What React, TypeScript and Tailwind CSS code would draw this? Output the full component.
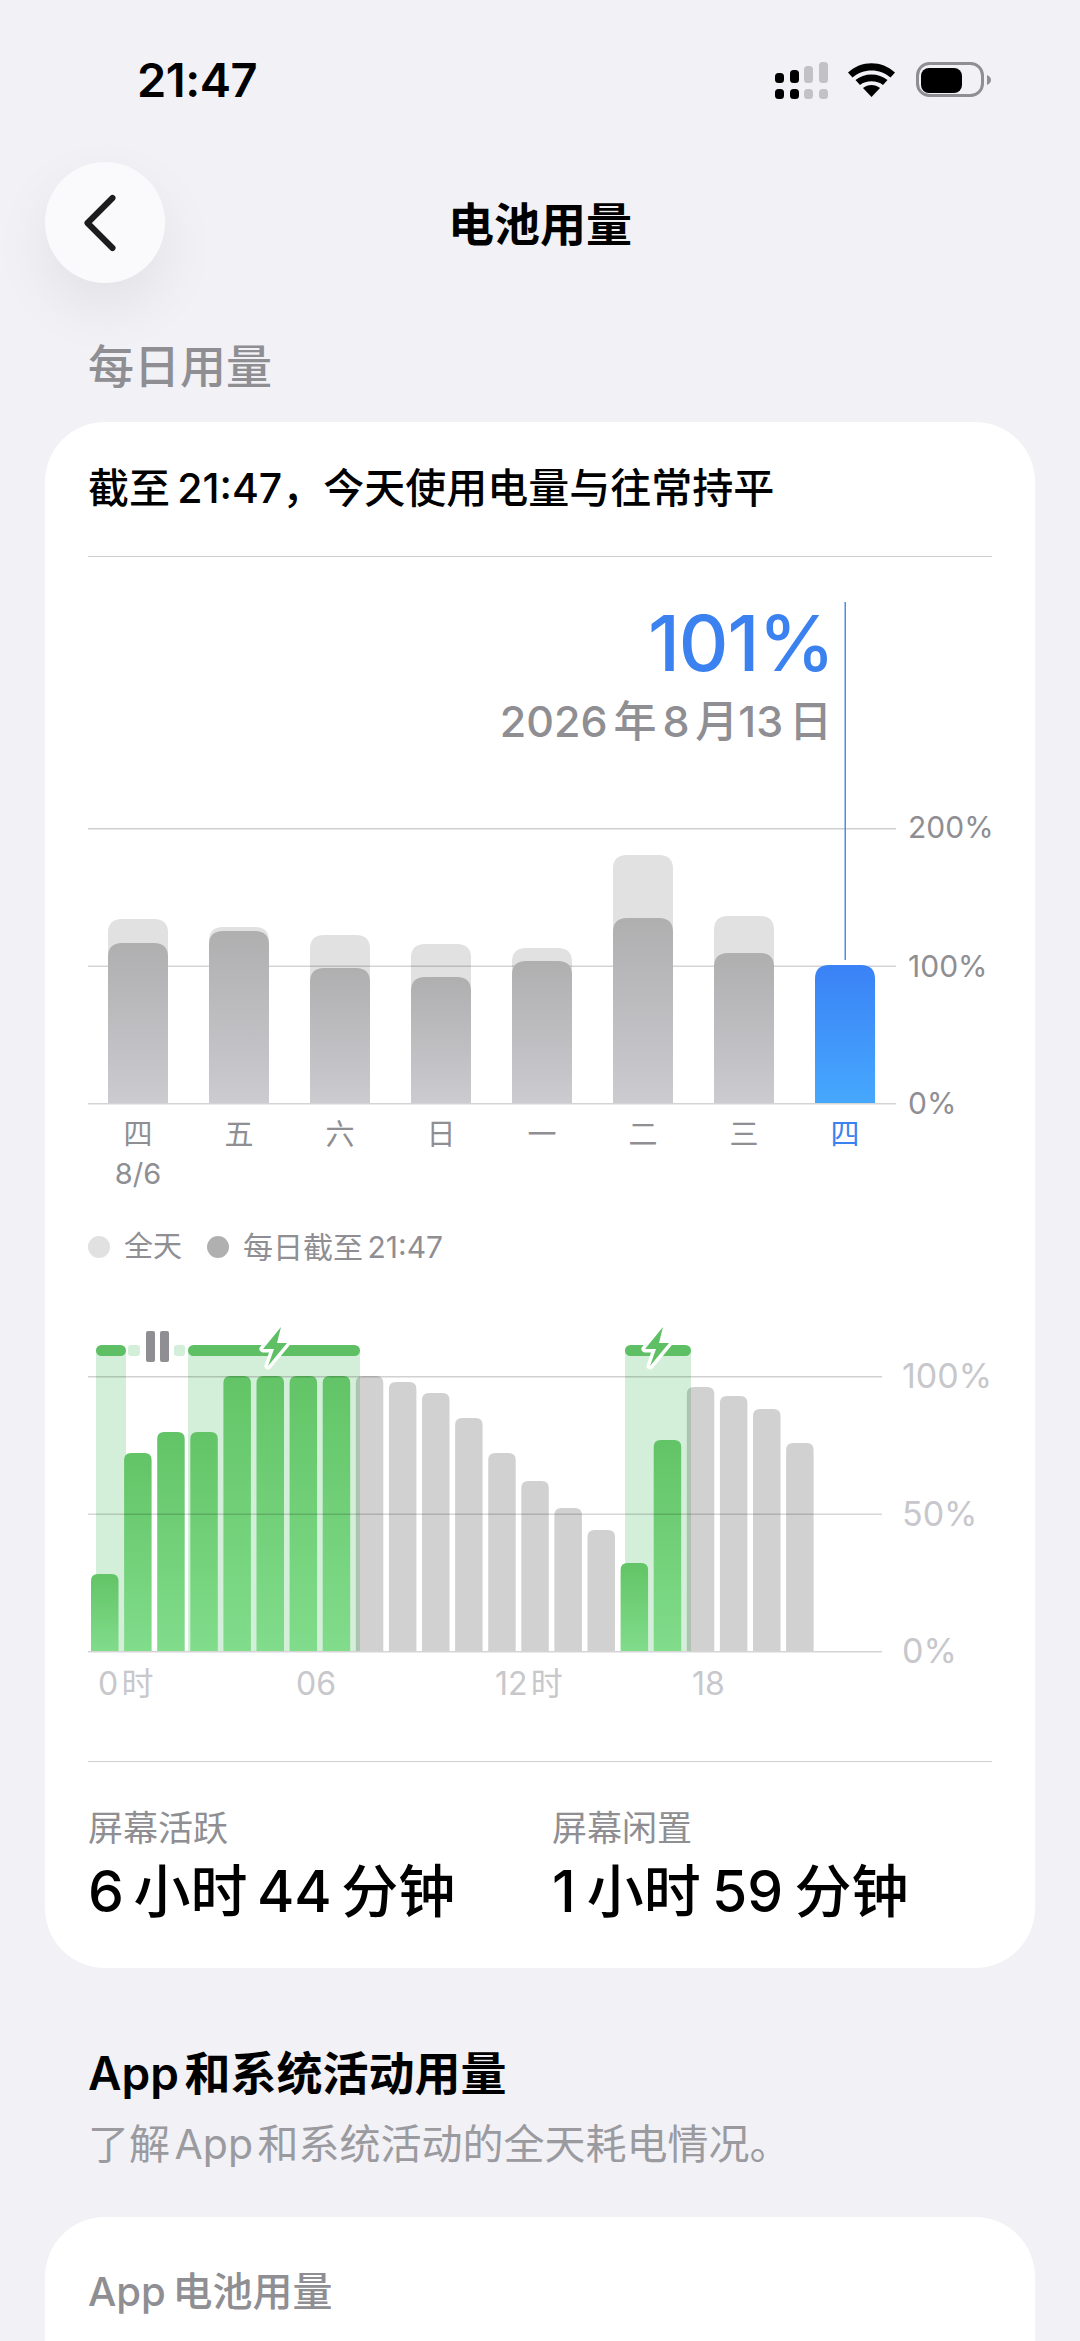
import { ChevronLeft } from 'lucide-react';

const dayBars = [
  { x: 108, full: 919, today: 943 },
  { x: 209, full: 927, today: 931 },
  { x: 310, full: 935, today: 968 },
  { x: 411, full: 944, today: 977 },
  { x: 512, full: 948, today: 961 },
  { x: 613, full: 855, today: 918 },
  { x: 714, full: 916, today: 953 },
];

const dayLabels = ['四', '五', '六', '日', '一', '二', '三', '四'];

// zoomed tops converted to page y
const hourBars = [
  { top: 1574, green: true },
  { top: 1453, green: true },
  { top: 1432, green: true },
  { top: 1432, green: true },
  { top: 1376, green: true },
  { top: 1376, green: true },
  { top: 1376, green: true },
  { top: 1376, green: true },
  { top: 1376, green: false },
  { top: 1382, green: false },
  { top: 1393, green: false },
  { top: 1418, green: false },
  { top: 1453, green: false },
  { top: 1481, green: false },
  { top: 1508, green: false },
  { top: 1530, green: false },
  { top: 1563, green: true },
  { top: 1440, green: true },
  { top: 1387, green: false },
  { top: 1396, green: false },
  { top: 1409, green: false },
  { top: 1443, green: false },
];

function topRounded(x: number, y: number, w: number, bottom: number, r: number) {
  return `M${x} ${bottom}V${y + r}Q${x} ${y} ${x + r} ${y}H${x + w - r}Q${x + w} ${y} ${x + w} ${y + r}V${bottom}Z`;
}

function StatusIcons() {
  const cols = [775, 790, 804, 819];
  const tops = [73, 70, 66, 62];
  return (
    <svg width="216" height="40" viewBox="775 60 216 40">
      {cols.map((x, i) => (
        <g key={x} fill={i < 2 ? '#000000' : '#c2c2c6'}>
          <rect x={x} y={tops[i]} width="9" height={83 - tops[i]} rx="3.5" />
          <rect x={x} y="89" width="9" height="10" rx="3.5" />
        </g>
      ))}
      <path d="M848 72.5C861 60 882 60 895 72.5L890.5 77.5C880 68 863 68 852.5 77.5Z" fill="#000" />
      <path d="M855.5 80C864 72.500 879 72.500 887.500 80L883 85C877 80 866 80 860 85Z" fill="#000" />
      <path d="M863 88C868 84 875 84 880 88L871.500 97Z" fill="#000" />
      <rect x="917.500" y="63.500" width="65" height="32" rx="12" fill="none" stroke="#8e8e93" strokeWidth="3" />
      <rect x="921" y="68" width="41" height="25" rx="8" fill="#000" />
      <path d="M987 75Q991 77 991 80Q991 83 987 85Z" fill="#8e8e93" />
    </svg>
  );
}

function DailyChart() {
  return (
    <svg className="absolute inset-0" width="904" height="548" viewBox="88 557 904 548">
      <defs>
        <linearGradient id="dayGray" x1="0" y1="0" x2="0" y2="1">
          <stop offset="0" stopColor="#afafb0" />
          <stop offset="1" stopColor="#cbcbd0" />
        </linearGradient>
        <linearGradient id="dayBlue" x1="0" y1="0" x2="0" y2="1">
          <stop offset="0" stopColor="#3a82f6" />
          <stop offset="1" stopColor="#46a8fd" />
        </linearGradient>
      </defs>
      {dayBars.map((b) => (
        <path key={b.x} d={topRounded(b.x, b.full, 60, 1103, 14)} fill="#e1e1e2" />
      ))}
      {/* 100% line sits between the full-day and up-to-now bars */}
      <rect x="88" y="965.500" width="808" height="1.500" fill="#000" fillOpacity="0.17" />
      {dayBars.map((b) => (
        <path key={b.x} d={topRounded(b.x, b.today, 60, 1103, 14)} fill="url(#dayGray)" />
      ))}
      <path d={topRounded(815, 965, 60, 1103, 14)} fill="url(#dayBlue)" />
      <rect x="88" y="828" width="808" height="1.500" fill="#000" fillOpacity="0.19" />
      <rect x="88" y="1103" width="808" height="1.500" fill="#000" fillOpacity="0.17" />
      <rect x="844.500" y="602" width="1.500" height="358" fill="#4a8df0" />
    </svg>
  );
}

function Bolt({ dx }: { dx: number }) {
  return (
    <path
      transform={`translate(${dx} 0)`}
      d="M281 1327L263 1349H274L268 1366L287 1343H277Z"
      fill="#5ebf64"
      stroke="#ffffff"
      strokeWidth="7"
      strokeLinejoin="round"
      paintOrder="stroke"
    />
  );
}

function HourlyChart() {
  return (
    <svg width="904" height="335" viewBox="88 1320 904 335" className="block">
      <defs>
        <linearGradient id="hourGreen" x1="0" y1="0" x2="0" y2="1">
          <stop offset="0" stopColor="#62c466" />
          <stop offset="1" stopColor="#81dc8b" />
        </linearGradient>
      </defs>
      {/* charging spans */}
      <rect x="96" y="1350" width="30" height="301" fill="#d4efd9" />
      <rect x="188" y="1350" width="172" height="301" fill="#d4efd9" />
      <rect x="625" y="1350" width="66" height="301" fill="#d4efd9" />
      <rect x="128" y="1345" width="12" height="11" rx="3" fill="#d4efd9" />
      <rect x="174" y="1345" width="11" height="11" rx="3" fill="#d4efd9" />
      <rect x="96" y="1345" width="30" height="11" rx="5.500" fill="#5ebf64" />
      <rect x="188" y="1345" width="172" height="11" rx="5.500" fill="#5ebf64" />
      <rect x="625" y="1345" width="66" height="11" rx="5.500" fill="#5ebf64" />
      <rect x="146" y="1331" width="9" height="31" rx="2" fill="#8e8e93" />
      <rect x="160" y="1331" width="9" height="31" rx="2" fill="#8e8e93" />
      {hourBars.map((b, i) => (
        <path
          key={i}
          d={topRounded(91 + i * 33.1, b.top, 27.500, 1651, 7)}
          fill={b.green ? 'url(#hourGreen)' : '#000000'}
          fillOpacity={b.green ? 1 : 0.18}
        />
      ))}
      <rect x="88" y="1376" width="794" height="1.500" fill="#000" fillOpacity="0.18" />
      <rect x="88" y="1513.500" width="794" height="1.500" fill="#000" fillOpacity="0.16" />
      <rect x="88" y="1651" width="794" height="1.500" fill="#000" fillOpacity="0.17" />
      <Bolt dx={0} />
      <Bolt dx={382} />
    </svg>
  );
}

export default function App() {
  return (
    <div className="w-[1080px] h-[2341px] overflow-hidden bg-[#f1f1f6] font-[Inter,'Noto_Sans_CJK_SC',sans-serif] text-black">
      {/* Status bar */}
      <div className="h-[162px] pb-[2px] pl-[137px] pr-[89px] flex items-center justify-between">
        <span className="text-[47px] leading-[52px] font-semibold tracking-[-0.5px]">21:47</span>
        <StatusIcons />
      </div>

      {/* Nav */}
      <div className="h-[121px] px-[45px] grid grid-cols-[120px_1fr_120px] items-center">
        <button className="w-[120px] h-[121px] rounded-full bg-[#fafafc] shadow-[0_24px_60px_rgba(0,0,0,0.07)] flex items-center justify-center">
          <ChevronLeft size={100} strokeWidth={1.45} color="#1c1c1e" className="-ml-[10px]" />
        </button>
        <h1 className="pt-[2px] text-center text-[46px] leading-[60px] font-semibold">电池用量</h1>
      </div>

      <h2 className="mt-[53px] mb-[26px] ml-[88px] text-[46px] leading-[60px] font-medium text-[#8e8e93]">每日用量</h2>

      {/* Daily card */}
      <div className="mx-[45px] rounded-[60px] bg-white px-[43px] pb-[41px]">
        <div className="h-[135px] flex items-center border-b border-[#cfcfd3] text-[41px] font-medium whitespace-nowrap [word-spacing:-0.09em]">
          截至 21:47，今天使用电量与往常持平
        </div>

        <div className="relative h-[548px]">
          <DailyChart />
          <div className="relative pt-[40px] pr-[158px] text-right">
            <div className="text-[77px] leading-[92px] font-medium text-[#3b82f0] tracking-[-1px]">101%</div>
            <div className="mt-[2px] pr-[2px] text-[43px] leading-[60px] font-medium text-[#8e8e93] [word-spacing:-0.13em]">
              2026 年 8 月13 日
            </div>
          </div>
          <span className="absolute left-[820px] top-[250px] text-[30px] leading-[40px] text-[#8e8e93]">200%</span>
          <span className="absolute left-[820px] top-[389px] text-[30px] leading-[40px] text-[#8e8e93]">100%</span>
          <span className="absolute left-[820px] top-[526px] text-[30px] leading-[40px] text-[#8e8e93]">0%</span>
        </div>

        <div className="mt-[10px] pl-[20px] flex gap-[41px] text-[29px] leading-[39px] text-[#8e8e93]">
          {dayLabels.map((d, i) => (
            <div key={i} className={i === 7 ? 'w-[60px] text-center text-[#3b82f0]' : 'w-[60px] text-center'}>
              {d}
              {i === 0 && <div>8/6</div>}
            </div>
          ))}
        </div>

        <div className="mt-[34px] h-[40px] flex items-center text-[29px] text-[#8e8e93]">
          <span className="w-[22px] h-[22px] rounded-full bg-[#e1e1e2]" />
          <span className="ml-[14px]">全天</span>
          <span className="ml-[25px] w-[22px] h-[22px] rounded-full bg-[#b0b0b1]" />
          <span className="ml-[14px] text-[30px] [word-spacing:-0.13em]">每日截至 21:47</span>
        </div>

        <div className="relative mt-[53px]">
          <HourlyChart />
          <span className="absolute left-[814px] top-[36px] text-[34px] leading-[40px] text-[#c7c7cc]">100%</span>
          <span className="absolute left-[814px] top-[174px] text-[34px] leading-[40px] text-[#c7c7cc]">50%</span>
          <span className="absolute left-[814px] top-[311px] text-[34px] leading-[40px] text-[#c7c7cc]">0%</span>
        </div>

        <div className="mt-[9px] h-[40px] flex items-center text-[32px] text-[#c7c7cc] [word-spacing:-0.18em]">
          <span className="ml-[10px] w-[198px]">0 时</span>
          <span className="w-[199px]">06</span>
          <span className="w-[197px]">12 时</span>
          <span>18</span>
        </div>

        <div className="mt-[57px] pt-[44px] border-t border-[#cfcfd3] grid grid-cols-[464px_1fr]">
          <div>
            <div className="text-[35px] leading-[44px] text-[#8e8e93]">屏幕活跃</div>
            <div className="mt-[7px] text-[57px] leading-[70px] font-medium [word-spacing:-0.1em] whitespace-nowrap">6 小时 44 分钟</div>
          </div>
          <div>
            <div className="text-[35px] leading-[44px] text-[#8e8e93]">屏幕闲置</div>
            <div className="mt-[7px] text-[57px] leading-[70px] font-medium [word-spacing:-0.07em] whitespace-nowrap">1 小时 59 分钟</div>
          </div>
        </div>
      </div>

      <h2 className="mt-[75px] ml-[88px] text-[46px] leading-[60px] font-semibold [word-spacing:-0.13em]">App 和系统活动用量</h2>
      <p className="mt-[16px] ml-[88px] text-[41px] leading-[50px] text-[#9a9a9f] [word-spacing:-0.17em]">了解 App 和系统活动的全天耗电情况。</p>

      <div className="mt-[48px] mx-[45px] rounded-t-[60px] bg-white pt-[50px] pl-[43px] pb-[60px]">
        <div className="text-[40px] leading-[50px] font-medium text-[#8e8e93] [word-spacing:-0.1em]">App 电池用量</div>
      </div>
    </div>
  );
}
